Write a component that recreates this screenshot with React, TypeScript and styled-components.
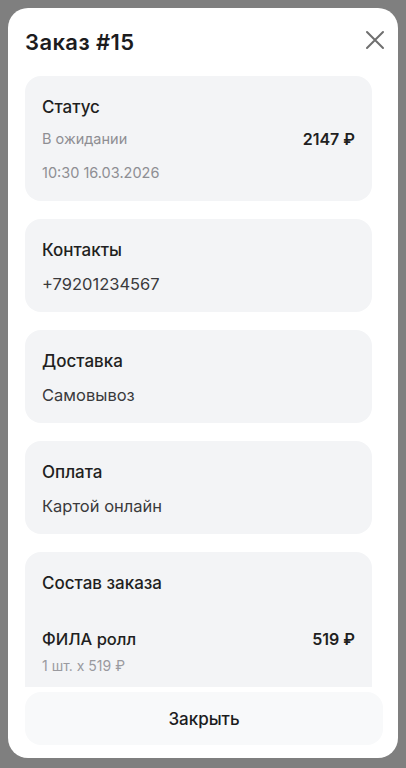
import React from 'react';
import styled, { createGlobalStyle } from 'styled-components';

const GlobalStyle = createGlobalStyle`
  html, body {
    margin: 0;
    padding: 0;
    background: #7f7f7f;
  }
  body {
    font-family: Inter, "Noto Sans", "Liberation Sans", sans-serif;
    -webkit-font-smoothing: antialiased;
  }
  * {
    box-sizing: border-box;
  }
`;

const Backdrop = styled.div`
  width: 406px;
  height: 768px;
  padding: 8px;
  background: #7f7f7f;
`;

const Modal = styled.div`
  height: 750px;
  display: flex;
  flex-direction: column;
  background: #ffffff;
  border-radius: 20px;
  padding: 17px 15px 13px 17px;
  overflow: hidden;
`;

const Header = styled.div`
  display: flex;
  align-items: center;
  justify-content: space-between;
  height: 34px;
  margin-bottom: 17px;
`;

const Title = styled.h2`
  margin: 0;
  font-size: 22px;
  font-weight: 600;
  color: #1c1c1e;
  letter-spacing: 0.4px;
`;

const CloseButton = styled.button`
  width: 24px;
  height: 24px;
  padding: 0;
  border: none;
  background: none;
  display: flex;
  align-items: center;
  justify-content: center;
  color: #6f6f6f;
  margin-right: -4px;
  margin-top: -4px;
  cursor: pointer;
`;

const Scroll = styled.div`
  flex: 1;
  min-height: 0;
  overflow: hidden;
  padding-right: 11px;
  display: flex;
  flex-direction: column;
  gap: 18px;
`;

const Card = styled.div<{ $clip?: boolean }>`
  flex-shrink: 0;
  background: #f3f4f6;
  border-radius: ${(p) => (p.$clip ? '16px 16px 0 0' : '16px')};
  padding: 20px 17px 17px;
  display: flex;
  flex-direction: column;
`;

const CardTitle = styled.div`
  font-size: 17px;
  line-height: 22px;
  font-weight: 500;
  color: #1f1f21;
`;

const Row = styled.div<{ $gap?: number }>`
  display: flex;
  align-items: center;
  justify-content: space-between;
  height: 22px;
  margin-top: ${(p) => p.$gap ?? 12}px;
`;

const Value = styled.div<{ $muted?: boolean; $small?: boolean }>`
  font-size: ${(p) => (p.$small ? 14.5 : 16.5)}px;
  line-height: 22px;
  color: ${(p) => (p.$muted ? '#8e8e93' : '#3a3a3c')};
`;

const Price = styled.div`
  font-size: 16px;
  line-height: 22px;
  font-weight: 600;
  color: #1f1f21;
`;

const ItemName = styled.div`
  font-size: 16.5px;
  line-height: 22px;
  font-weight: 500;
  color: #1f1f21;
`;

const ItemSub = styled.div`
  font-size: 14px;
  line-height: 20px;
  color: #9a9a9f;
  margin-top: 6px;
`;

const Footer = styled.button`
  flex-shrink: 0;
  margin-top: 5px;
  height: 53px;
  width: 100%;
  border: none;
  border-radius: 16px;
  background: #f8f9fa;
  font-family: inherit;
  font-size: 17px;
  font-weight: 500;
  color: #1c1c1e;
  cursor: pointer;
`;

const XIcon = () => (
  <svg width="20" height="20" viewBox="0 0 20 20" fill="none">
    <path d="M2 2L18 18M18 2L2 18" stroke="currentColor" strokeWidth="2" strokeLinecap="round" />
  </svg>
);

export default function App() {
  return (
    <>
      <GlobalStyle />
      <Backdrop>
        <Modal>
          <Header>
            <Title>Заказ #15</Title>
            <CloseButton aria-label="Закрыть">
              <XIcon />
            </CloseButton>
          </Header>

          <Scroll>
            <Card>
              <CardTitle>Статус</CardTitle>
              <Row $gap={10}>
                <Value $muted $small>В ожидании</Value>
                <Price>2147 ₽</Price>
              </Row>
              <Row $gap={12}>
                <Value $muted $small>10:30 16.03.2026</Value>
              </Row>
            </Card>

            <Card>
              <CardTitle>Контакты</CardTitle>
              <Row>
                <Value>+79201234567</Value>
              </Row>
            </Card>

            <Card>
              <CardTitle>Доставка</CardTitle>
              <Row>
                <Value>Самовывоз</Value>
              </Row>
            </Card>

            <Card>
              <CardTitle>Оплата</CardTitle>
              <Row>
                <Value>Картой онлайн</Value>
              </Row>
            </Card>

            <Card $clip>
              <CardTitle>Состав заказа</CardTitle>
              <Row $gap={34}>
                <ItemName>ФИЛА ролл</ItemName>
                <Price>519 ₽</Price>
              </Row>
              <ItemSub>1 шт. x 519 ₽</ItemSub>
              <ItemSub>&nbsp;</ItemSub>
            </Card>
          </Scroll>

          <Footer>Закрыть</Footer>
        </Modal>
      </Backdrop>
    </>
  );
}
